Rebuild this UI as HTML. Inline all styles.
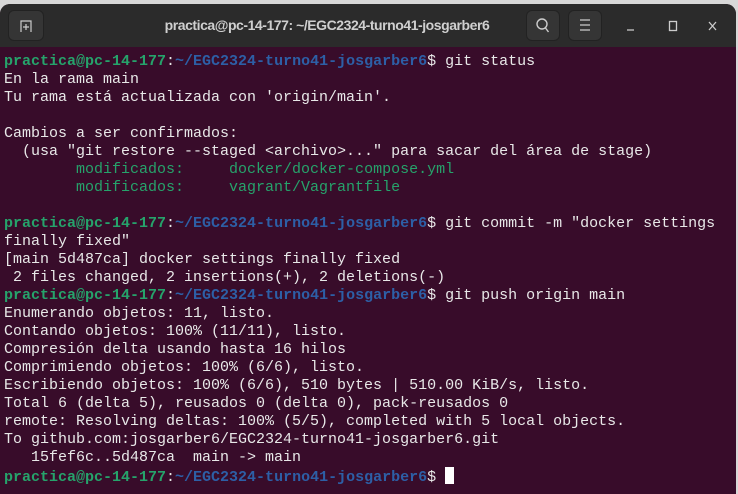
<!DOCTYPE html>
<html><head><meta charset="utf-8"><style>
html,body{margin:0;padding:0;width:738px;height:485px;overflow:hidden;background:#d8d8d8;}
.win{position:absolute;left:0;top:4px;width:736px;height:490px;background:#380c2a;border-radius:10px 10px 0 0;overflow:hidden;}
.tb{position:absolute;left:0;top:0;width:736px;height:43px;background:#2b2b2b;}
.btn{position:absolute;top:6px;height:31px;border-radius:6px;background:#353535;border:1px solid #222;box-sizing:border-box;}
.title{position:absolute;left:147px;width:360px;top:13px;text-align:center;font:bold 14px "Liberation Sans",sans-serif;color:#cfcfcf;letter-spacing:-0.45px;white-space:nowrap;}
.term{position:absolute;left:4px;top:49px;font:15px/18px "Liberation Mono",monospace;color:#e8e8e8;white-space:pre;}
.g{color:#26a36b;font-weight:bold}.b{color:#2d5fa6;font-weight:bold}.m{color:#26a36b}
.cur{display:inline-block;width:9px;height:17px;background:#fff;vertical-align:-3px}
</style></head><body>
<div class="win">
<div class="tb">
<div class="btn" style="left:8px;width:36px"></div>
<svg style="position:absolute;left:18px;top:14px" width="16" height="16" viewBox="0 0 16 16" fill="none" stroke="#ccc" stroke-width="1.2"><path d="M3 14V3h10v11"/><path d="M8 6v6M5 9h6"/></svg>
<div class="title">practica@pc-14-177: ~/EGC2324-turno41-josgarber6</div>
<div class="btn" style="left:526px;width:34px"></div>
<svg style="position:absolute;left:535px;top:13px" width="16" height="18" viewBox="0 0 16 18" fill="none" stroke="#ccc" stroke-width="1.4"><circle cx="7" cy="7" r="5"/><path d="M10.5 11l3 4"/></svg>
<div class="btn" style="left:568px;width:34px"></div>
<svg style="position:absolute;left:578px;top:14px" width="14" height="14" viewBox="0 0 14 14" stroke="#ccc" stroke-width="1.3"><path d="M2 2h10M2 7h10M2 12h10"/></svg>
<svg style="position:absolute;left:620px;top:14px" width="110" height="16" stroke="#ccc" stroke-width="1.3" fill="none"><path d="M7 12h7"/><rect x="49.5" y="3.5" width="7" height="9"/><path d="M89 4l7 8M96 4l-7 8"/></svg>
</div>
<div class="term"><span class="g">practica@pc-14-177</span>:<span class="b">~/EGC2324-turno41-josgarber6</span>$ git status
En la rama main
Tu rama está actualizada con 'origin/main'.

Cambios a ser confirmados:
  (usa "git restore --staged &lt;archivo&gt;..." para sacar del área de stage)
	<span class="m">modificados:     docker/docker-compose.yml</span>
	<span class="m">modificados:     vagrant/Vagrantfile</span>

<span class="g">practica@pc-14-177</span>:<span class="b">~/EGC2324-turno41-josgarber6</span>$ git commit -m "docker settings
finally fixed"
[main 5d487ca] docker settings finally fixed
 2 files changed, 2 insertions(+), 2 deletions(-)
<span class="g">practica@pc-14-177</span>:<span class="b">~/EGC2324-turno41-josgarber6</span>$ git push origin main
Enumerando objetos: 11, listo.
Contando objetos: 100% (11/11), listo.
Compresión delta usando hasta 16 hilos
Comprimiendo objetos: 100% (6/6), listo.
Escribiendo objetos: 100% (6/6), 510 bytes | 510.00 KiB/s, listo.
Total 6 (delta 5), reusados 0 (delta 0), pack-reusados 0
remote: Resolving deltas: 100% (5/5), completed with 5 local objects.
To github.com:josgarber6/EGC2324-turno41-josgarber6.git
   15fef6c..5d487ca  main -&gt; main
<span class="g">practica@pc-14-177</span>:<span class="b">~/EGC2324-turno41-josgarber6</span>$ <span class="cur"></span></div>
</div>
</body></html>
